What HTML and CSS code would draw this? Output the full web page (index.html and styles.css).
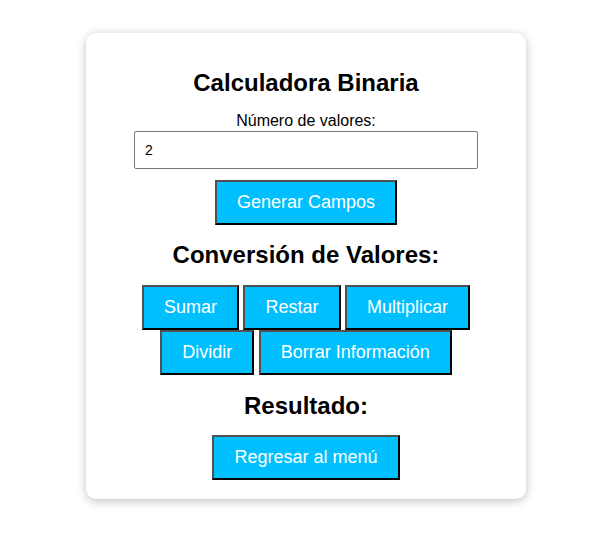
FILE: index.html
```html
<!DOCTYPE html>
<html lang="es">
<head>
<meta charset="utf-8">
<title>Calculadora Binaria</title>
<link rel="stylesheet" href="styles.css">
</head>
<body>
<div class="card">
  <h1 class="heading">Calculadora Binaria</h1>
  <label class="label" for="num">Número de valores:</label>
  <input class="field" id="num" type="number" value="2">
  <div class="row gen-row">
    <button class="btn">Generar Campos</button>
  </div>
  <h2 class="heading ops-heading">Conversión de Valores:</h2>
  <div class="row">
    <button class="btn">Sumar</button>
    <button class="btn">Restar</button>
    <button class="btn">Multiplicar</button>
    <button class="btn">Dividir</button>
    <button class="btn">Borrar Información</button>
  </div>
  <h2 class="heading result-heading">Resultado:</h2>
  <div class="row">
    <button class="btn">Regresar al menú</button>
  </div>
</div>
</body>
</html>
```
FILE: styles.css
```css
html, body {
  margin: 0;
  background: #ffffff;
}
body {
  padding: 33px 0 40px 9px;
  font-family: "Liberation Sans", Arial, sans-serif;
  font-size: 16px;
  color: #000;
}
.card {
  width: 400px;
  margin: 0 auto;
  padding: 20px 20px 19px;
  background: #fff;
  border-radius: 10px;
  box-shadow: 0 2px 10px rgba(0, 0, 0, 0.25);
  text-align: center;
}
.heading {
  font-size: 24px;
  font-weight: bold;
  margin: 16px 0;
  line-height: 27px;
}
.ops-heading {
  margin: 16px 0 17px;
}
.result-heading {
  margin: 17px 0 16px;
}
.label {
  display: block;
  font-size: 16px;
  line-height: 18px;
}
.field {
  display: block;
  box-sizing: border-box;
  width: 344px;
  height: 38px;
  margin: 1px auto 0;
  padding: 10px;
  font-family: "Liberation Sans", Arial, sans-serif;
  font-size: 14px;
  border: 1px solid #767676;
  border-radius: 2px;
  background: #fff;
  color: #000;
  -moz-appearance: textfield;
}
.field::-webkit-outer-spin-button,
.field::-webkit-inner-spin-button {
  -webkit-appearance: none;
  margin: 0;
}
.gen-row {
  margin-top: 11px;
}
.row {
  line-height: 0;
}
.btn {
  display: inline-block;
  vertical-align: top;
  box-sizing: border-box;
  height: 45px;
  margin: 0;
  padding: 10px 20px;
  font-family: "Liberation Sans", Arial, sans-serif;
  font-size: 18px;
  line-height: 21px;
  color: #fff;
  background: #00bfff;
  border: 2px solid;
  border-color: #505050 #000 #000 #505050;
  border-radius: 0;
  cursor: pointer;
}
```
